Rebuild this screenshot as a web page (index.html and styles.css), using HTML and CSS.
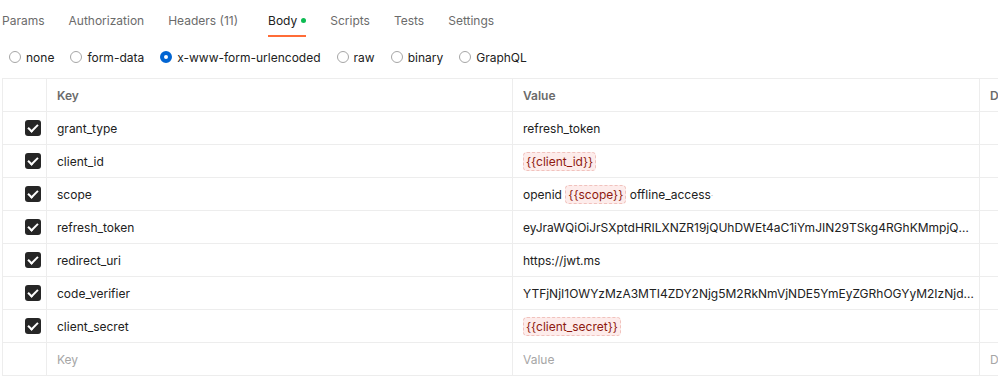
FILE: index.html
```html
<!DOCTYPE html>
<html lang="en">
<head>
  <meta charset="UTF-8" />
  <title>Body - x-www-form-urlencoded</title>
  <link rel="stylesheet" href="styles.css">
</head>
<body>
  <div class="request-tabs">
    <div class="tab">Params</div>
    <div class="tab">Authorization</div>
    <div class="tab">Headers (11)</div>
    <div class="tab active">Body<span class="dot"></span></div>
    <div class="tab">Scripts</div>
    <div class="tab">Tests</div>
    <div class="tab">Settings</div>
  </div>

  <div class="body-types">
    <label class="radio"><span class="circle"></span>none</label>
    <label class="radio"><span class="circle"></span>form-data</label>
    <label class="radio"><span class="circle checked"></span>x-www-form-urlencoded</label>
    <label class="radio"><span class="circle"></span>raw</label>
    <label class="radio"><span class="circle"></span>binary</label>
    <label class="radio"><span class="circle"></span>GraphQL</label>
  </div>

  <div class="kv-table">
    <div class="kv-row head">
      <div class="cell check"></div>
      <div class="cell"><span class="text">Key</span></div>
      <div class="cell"><span class="text">Value</span></div>
      <div class="cell"><span class="text">Description</span></div>
    </div>
    <div class="kv-row">
      <div class="cell check"><span class="box"></span></div>
      <div class="cell"><span class="text">grant_type</span></div>
      <div class="cell"><span class="text">refresh_token</span></div>
      <div class="cell"></div>
    </div>
    <div class="kv-row">
      <div class="cell check"><span class="box"></span></div>
      <div class="cell"><span class="text">client_id</span></div>
      <div class="cell"><span class="text"><span class="var">{{client_id}}</span></span></div>
      <div class="cell"></div>
    </div>
    <div class="kv-row">
      <div class="cell check"><span class="box"></span></div>
      <div class="cell"><span class="text">scope</span></div>
      <div class="cell"><span class="text">openid <span class="var">{{scope}}</span> offline_access<span class="space">·</span></span></div>
      <div class="cell"></div>
    </div>
    <div class="kv-row">
      <div class="cell check"><span class="box"></span></div>
      <div class="cell"><span class="text">refresh_token</span></div>
      <div class="cell"><span class="text">eyJraWQiOiJrSXptdHRILXNZR19jQUhDWEt4aC1iYmJIN29TSkg4RGhKMmpjQWRrNmFCZ1RzIiwiYWxnIjoiUlMyNTYifQ</span></div>
      <div class="cell"></div>
    </div>
    <div class="kv-row">
      <div class="cell check"><span class="box"></span></div>
      <div class="cell"><span class="text">redirect_uri</span></div>
      <div class="cell"><span class="text">https://jwt.ms</span></div>
      <div class="cell"></div>
    </div>
    <div class="kv-row">
      <div class="cell check"><span class="box"></span></div>
      <div class="cell"><span class="text">code_verifier</span></div>
      <div class="cell"><span class="text">YTFjNjI1OWYzMzA3MTI4ZDY2Njg5M2RkNmVjNDE5YmEyZGRhOGYyM2IzNjdmNzE4ZWE2</span></div>
      <div class="cell"></div>
    </div>
    <div class="kv-row">
      <div class="cell check"><span class="box"></span></div>
      <div class="cell"><span class="text">client_secret</span></div>
      <div class="cell"><span class="text"><span class="var">{{client_secret}}</span></span></div>
      <div class="cell"></div>
    </div>
    <div class="kv-row placeholder">
      <div class="cell check"></div>
      <div class="cell"><span class="text">Key</span></div>
      <div class="cell"><span class="text">Value</span></div>
      <div class="cell"><span class="text">Description</span></div>
    </div>
  </div>
</body>
</html>
```

FILE: styles.css
```css
body {
  margin: 0;
  font-family: Inter, "Noto Sans", sans-serif;
  font-size: 12px;
  color: #212121;
  background-color: #fff;
  overflow: hidden;
}

.request-tabs {
  display: flex;
  gap: 24px;
  padding: 0 0 0 2px;
  height: 38px;
}

.tab {
  display: flex;
  align-items: center;
  color: #6b6b6b;
  padding-top: 3px;
  box-sizing: border-box;
  height: 37px;
}

.tab.active {
  color: #212121;
  border-bottom: 2px solid #ff6c37;
  padding-top: 5px;
  margin-left: 6px;
}

.dot {
  width: 5px;
  height: 5px;
  border-radius: 50%;
  background-color: #0cbb52;
  margin-left: 4px;
}

.body-types {
  display: flex;
  align-items: center;
  gap: 16px;
  padding: 0 0 0 9px;
  height: 38px;
  box-sizing: border-box;
}

.radio {
  display: flex;
  align-items: center;
  gap: 5px;
  color: #212121;
}

.circle {
  width: 10px;
  height: 10px;
  border: 1px solid #a6a6a6;
  border-radius: 50%;
  box-sizing: content-box;
}

.circle.checked {
  width: 4px;
  height: 4px;
  border: 4px solid #0265d2;
}

.kv-table {
  margin: 2px 0 0 2px;
  width: 1100px;
  border-top: 1px solid #ededed;
  border-left: 1px solid #ededed;
}

.kv-row {
  display: grid;
  grid-template-columns: 44px 466px 467px 1fr;
  height: 33px;
  border-bottom: 1px solid #ededed;
  box-sizing: border-box;
}

.cell {
  display: flex;
  align-items: center;
  padding: 0 3px 0 10px;
  border-right: 1px solid #ededed;
  min-width: 0;
}

.cell .text {
  display: block;
  width: 100%;
  white-space: nowrap;
  overflow: hidden;
  text-overflow: ellipsis;
}

.cell.check {
  justify-content: flex-end;
  padding: 0 5px 0 0;
}

.head .cell {
  color: #6b6b6b;
  font-weight: 600;
}

.placeholder .cell {
  color: #a6a6a6;
}

.box {
  width: 16px;
  height: 16px;
  border-radius: 3px;
  background-color: #262626;
  position: relative;
}

.box::after {
  content: "";
  position: absolute;
  left: 5px;
  top: 2px;
  width: 4px;
  height: 8px;
  border: solid #fff;
  border-width: 0 2.5px 2.5px 0;
  transform: rotate(45deg);
}

.var {
  display: inline-block;
  padding: 1px 2px;
  background-color: #fdeceb;
  border: 1px dashed #f1c2bd;
  border-radius: 4px;
  color: #8e1a10;
  line-height: 15px;
}

.space {
  color: #c4c4c4;
  font-size: 9px;
}
```
